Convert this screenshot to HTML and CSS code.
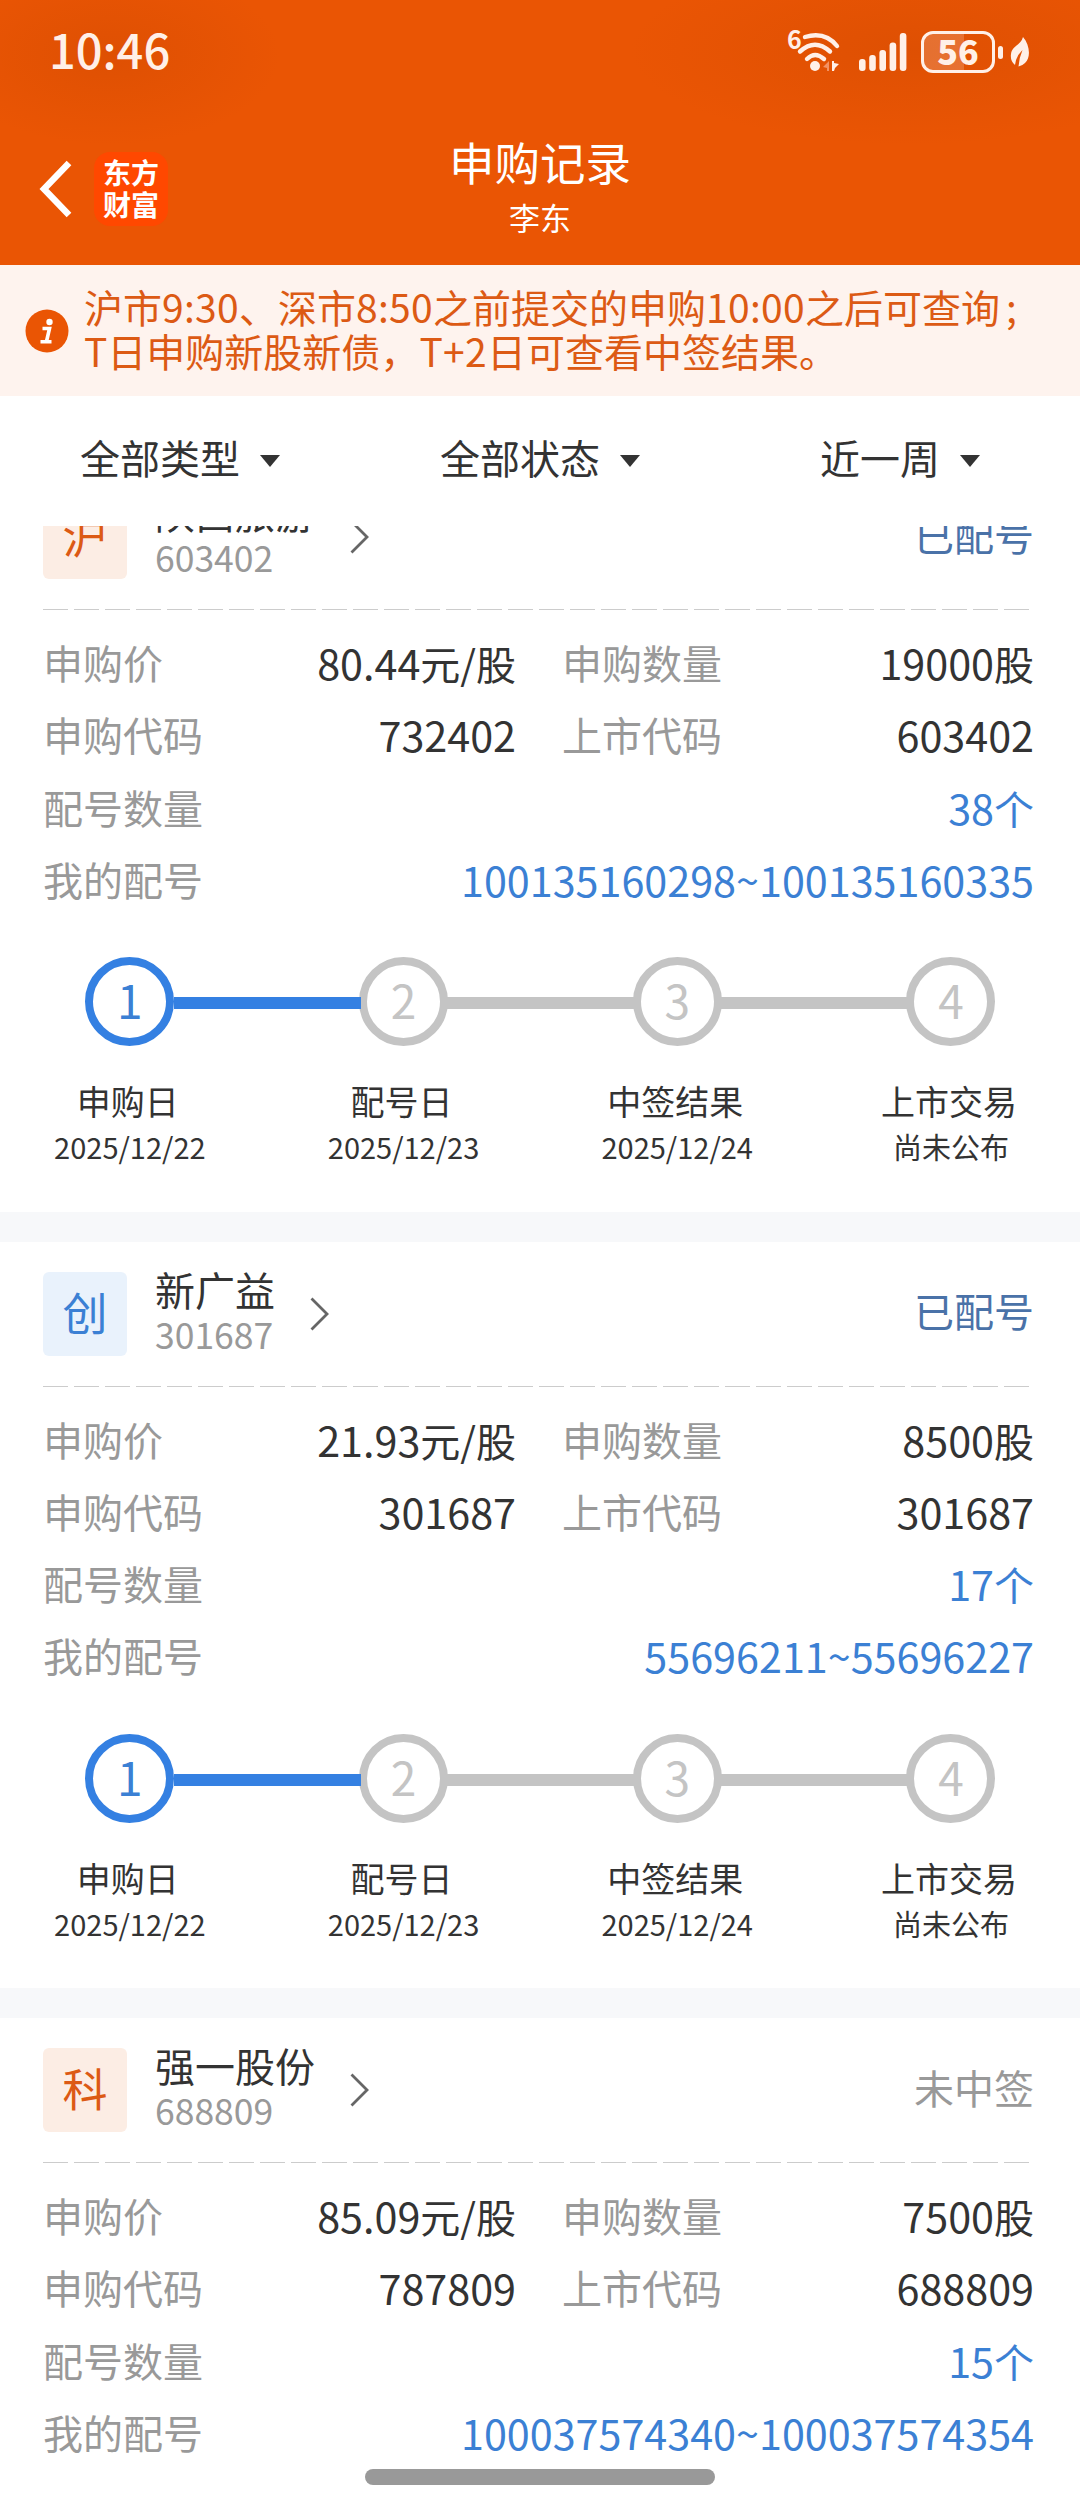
FILE: index.html
```
<!DOCTYPE html>
<html lang="zh-CN">
<head>
	<meta charset="UTF-8">
	<title>申购记录</title>
	<link rel="stylesheet" href="styles.css">
</head>
<body>
	<div class="header">
		<div class="status">
			<span class="time">10:46</span>
			<div class="status-icons">
				<svg class="icon-wifi" width="54" height="46" viewBox="0 0 54 46">
					<text x="0" y="20" class="wifi-num">6</text>
					<g fill="none" stroke="#fff0e8" stroke-width="4.4" stroke-linecap="round">
						<path d="M18 8 Q38 2 50 17"/>
						<path d="M13 22.5 Q28 9 43 22.5"/>
						<path d="M20 30 Q28 22 37 30"/>
					</g>
					<circle cx="28" cy="37" r="5" fill="#fff0e8"/>
					<path d="M42 32v10h-2v-3l-4-1z" fill="#f39263"/>
					<path d="M45 32h2v2l5 1-4 4-1 3h-2z" fill="#fff0e8"/>
				</svg>
				<svg class="icon-signal" width="48" height="40" viewBox="0 0 48 40">
					<g fill="#fff0e8">
						<rect x="0" y="27" width="6.6" height="12" rx="3"/>
						<rect x="10.2" y="23" width="6.6" height="16" rx="3"/>
						<rect x="20.4" y="18" width="6.6" height="21" rx="3"/>
						<rect x="30.6" y="10.5" width="6.6" height="28.5" rx="3"/>
						<rect x="40.8" y="1" width="6.6" height="38" rx="3"/>
					</g>
				</svg>
				<div class="battery"><span>56</span></div>
				<div class="battery-cap"></div>
				<svg class="icon-leaf" width="20" height="32" viewBox="0 0 20 32">
					<path d="M13 1 C20 9 21 22 15 27 Q12 30 8.500 30.500 Q9 22 12.500 14 Q6 20 5 29 Q0 25 1 18 C2 10 11 9 13 1z" fill="#fff0e8"/>
				</svg>
			</div>
		</div>
		<div class="nav">
			<div class="nav-left">
				<svg class="icon-back" width="34" height="58" viewBox="0 0 34 58">
					<path d="M29 3 L4 29 L29 55" fill="none" stroke="#fff" stroke-width="6.500"/>
				</svg>
				<div class="logo">东方<br>财富</div>
			</div>
			<div class="nav-title">
				<h1>申购记录</h1>
				<p>李东</p>
			</div>
		</div>
	</div>

	<div class="notice">
		<svg class="icon-info" width="44" height="44" viewBox="0 0 44 44">
			<circle cx="22" cy="22" r="21.500" fill="#ea5504"/>
			<circle cx="24.500" cy="13" r="3.200" fill="#fff"/>
			<path d="M17.500 19.500h7l-3 13M15.500 32.800h11" fill="none" stroke="#fff" stroke-width="3.600"/>
		</svg>
		<p>沪市<i>9:30</i>、深市<i>8:50</i>之前提交的申购<i>10:00</i>之后可查询<b>;</b><br>T日申购新股新债，<i>T+2</i>日可查看中签结果。</p>
	</div>

	<div class="filter">
		<a href="javascript:;">全部类型</a>
		<a href="javascript:;">全部状态</a>
		<a href="javascript:;">近一周</a>
	</div>

	<div class="list">
		<div class="list-inner">
			<div class="card">
				<div class="card-head">
					<span class="badge">沪</span>
					<div class="stock">
						<div class="name">陕西旅游</div>
						<div class="code">603402</div>
					</div>
					<svg class="icon-more" width="20" height="34" viewBox="0 0 20 34"><path d="M1.500 1.500 L17 17 L1.500 32.500" fill="none" stroke="#666" stroke-width="2.800"/></svg>
					<span class="state">已配号</span>
				</div>
				<div class="dash"></div>
				<div class="info">
					<div class="row">
						<span class="label">申购价</span><span class="value"><i>80.44</i>元/股</span>
						<span class="label second">申购数量</span><span class="value"><i>19000</i>股</span>
					</div>
					<div class="row">
						<span class="label">申购代码</span><span class="value"><i>732402</i></span>
						<span class="label second">上市代码</span><span class="value"><i>603402</i></span>
					</div>
					<div class="row wide"><span class="label">配号数量</span><span class="value blue"><i>38</i>个</span></div>
					<div class="row wide"><span class="label">我的配号</span><span class="value blue"><i>100135160298~100135160335</i></span></div>
				</div>
				<div class="steps">
					<div class="step on"><span class="dot">1</span><p>申购日</p><em>2025/12/22</em></div>
					<div class="step"><span class="dot">2</span><p>配号日</p><em>2025/12/23</em></div>
					<div class="step"><span class="dot">3</span><p>中签结果</p><em>2025/12/24</em></div>
					<div class="step"><span class="dot">4</span><p>上市交易</p><em>尚未公布</em></div>
				</div>
			</div>

			<div class="card">
				<div class="card-head">
					<span class="badge badge-blue">创</span>
					<div class="stock">
						<div class="name">新广益</div>
						<div class="code">301687</div>
					</div>
					<svg class="icon-more" width="20" height="34" viewBox="0 0 20 34"><path d="M1.500 1.500 L17 17 L1.500 32.500" fill="none" stroke="#666" stroke-width="2.800"/></svg>
					<span class="state">已配号</span>
				</div>
				<div class="dash"></div>
				<div class="info">
					<div class="row">
						<span class="label">申购价</span><span class="value"><i>21.93</i>元/股</span>
						<span class="label second">申购数量</span><span class="value"><i>8500</i>股</span>
					</div>
					<div class="row">
						<span class="label">申购代码</span><span class="value"><i>301687</i></span>
						<span class="label second">上市代码</span><span class="value"><i>301687</i></span>
					</div>
					<div class="row wide"><span class="label">配号数量</span><span class="value blue"><i>17</i>个</span></div>
					<div class="row wide"><span class="label">我的配号</span><span class="value blue"><i>55696211~55696227</i></span></div>
				</div>
				<div class="steps">
					<div class="step on"><span class="dot">1</span><p>申购日</p><em>2025/12/22</em></div>
					<div class="step"><span class="dot">2</span><p>配号日</p><em>2025/12/23</em></div>
					<div class="step"><span class="dot">3</span><p>中签结果</p><em>2025/12/24</em></div>
					<div class="step"><span class="dot">4</span><p>上市交易</p><em>尚未公布</em></div>
				</div>
			</div>

			<div class="card">
				<div class="card-head">
					<span class="badge">科</span>
					<div class="stock">
						<div class="name">强一股份</div>
						<div class="code">688809</div>
					</div>
					<svg class="icon-more" width="20" height="34" viewBox="0 0 20 34"><path d="M1.500 1.500 L17 17 L1.500 32.500" fill="none" stroke="#666" stroke-width="2.800"/></svg>
					<span class="state state-none">未中签</span>
				</div>
				<div class="dash"></div>
				<div class="info">
					<div class="row">
						<span class="label">申购价</span><span class="value"><i>85.09</i>元/股</span>
						<span class="label second">申购数量</span><span class="value"><i>7500</i>股</span>
					</div>
					<div class="row">
						<span class="label">申购代码</span><span class="value"><i>787809</i></span>
						<span class="label second">上市代码</span><span class="value"><i>688809</i></span>
					</div>
					<div class="row wide"><span class="label">配号数量</span><span class="value blue"><i>15</i>个</span></div>
					<div class="row wide"><span class="label">我的配号</span><span class="value blue"><i>100037574340~100037574354</i></span></div>
				</div>
			</div>
		</div>
	</div>
	<div class="home-bar"></div>
</body>
</html>
```
FILE: styles.css
```
* {padding: 0; margin: 0; box-sizing: border-box;}
html, body {
	height: 2504px;
	overflow: hidden;
}
body {
	position: relative;
	width: 1080px;
	display: flex;
	flex-direction: column;
	background: #fff;
	color: #333;
	font-size: 40px;
	font-family: "Noto Sans CJK SC", sans-serif;
}
i, em {font-style: normal;}
svg {display: block; flex: none; overflow: visible;}
a {color: inherit; text-decoration: none;}

/* 顶部 */
.header {
	height: 265px;
	flex: none;
	background:
		radial-gradient(ellipse 170px 90px at 110px 55px, rgba(200, 70, 0, .35), rgba(200, 70, 0, 0)),
		radial-gradient(ellipse 280px 95px at 910px 50px, rgba(200, 70, 0, .35), rgba(200, 70, 0, 0)),
		#ea5504;
	color: #fff;
}
.status {
	height: 104px;
	padding: 0 50px 0 49px;
	display: flex;
	justify-content: space-between;
	align-items: center;
	color: #fff0e8;
}
.time {
	margin-top: -7px;
	font-size: 47px;
	line-height: 60px;
	font-weight: 500;
}
.status-icons {
	display: flex;
	align-items: center;
}
.wifi-num {
	font-size: 25px;
	font-weight: 700;
	fill: #fff0e8;
}
.icon-signal {margin-left: 18px;}
.battery {
	width: 74px;
	height: 42px;
	margin-left: 14px;
	border: 3px solid #fff0e8;
	border-radius: 12px;
	background: linear-gradient(90deg, rgba(255, 240, 232, .2) 59%, transparent 59%);
	font-size: 34px;
	line-height: 34px;
	font-weight: 900;
	text-align: center;
}
.battery-cap {
	width: 5px;
	height: 13px;
	margin-left: 3px;
	border-radius: 3px;
	background: #fff0e8;
}
.icon-leaf {margin-left: 7px;}
.nav {
	height: 161px;
	padding: 0 40px;
	display: grid;
	grid-template-columns: 200px 1fr 200px;
}
.nav-left {
	display: flex;
	height: 76px;
	margin-top: 47px;
	align-items: center;
	gap: 20px;
}
.logo {
	width: 74px;
	height: 74px;
	border-radius: 16px;
	background: #ff4800;
	font-size: 28px;
	line-height: 32px;
	padding-top: 4px;
	font-weight: 700;
	text-align: center;
}
.nav-title {
	padding-top: 27px;
	text-align: center;
}
.nav-title h1 {
	font-size: 45.5px;
	line-height: 60px;
	font-weight: 400;
}
.nav-title p {
	margin-top: 5px;
	font-size: 31px;
	line-height: 42px;
}

/* 提示 */
.notice {
	height: 131px;
	flex: none;
	padding: 0 25px;
	display: flex;
	align-items: center;
	gap: 15px;
	background: #fef3ee;
	color: #dc5a14;
	font-size: 39px;
	line-height: 44px;
	white-space: nowrap;
}
.notice p {margin-top: -5px;}
.notice i {letter-spacing: .3px;}
.notice b {font-weight: 400; margin-left: 6px;}

/* 筛选 */
.filter {
	height: 130px;
	flex: none;
	display: grid;
	grid-template-columns: repeat(3, 1fr);
	align-items: center;
	line-height: 60px;
}
.filter a {
	display: flex;
	justify-content: center;
	align-items: center;
	gap: 20px;
	margin-top: -8px;
}
.filter a::after {
	content: "";
	margin-top: 8px;
	border: 10px solid transparent;
	border-top: 12px solid #333;
	border-bottom: 0;
}

/* 列表, 第一张卡片滚动到筛选栏下面 */
.list {
	flex: 1;
	overflow: hidden;
}
.list-inner {margin-top: -61px;}
.card {
	height: 776.6px;
	padding: 30px 46px 0 43px;
	border-bottom: 30px solid #f7f8fa;
}
.card-head {
	height: 84px;
	display: flex;
	align-items: center;
}
.badge {
	width: 84px;
	height: 84px;
	border-radius: 6px;
	background: #fcede4;
	color: #dc5a14;
	font-size: 45px;
	line-height: 79px;
	text-align: center;
}
.badge-blue {
	background: #e9f2fc;
	color: #3b80d4;
}
.stock {
	margin-left: 28px;
	align-self: flex-start;
}
.name {
	line-height: 44px;
	margin-top: -5px;
}
.code {
	margin-top: 1px;
	color: #999;
	font-size: 35.5px;
	line-height: 44px;
}
.icon-more {margin-left: 35px;}
.state {
	margin-left: auto;
	margin-top: -7px;
	color: #4a72a8;
}
.state-none {color: #999;}
.dash {
	height: 1px;
	margin-top: 30px;
	background: repeating-linear-gradient(90deg, #ccc 0, #ccc 25px, transparent 25px, transparent 31px);
}
.info {
	margin-top: 16px;
}
.row {
	height: 72.3px;
	line-height: 72px;
	display: grid;
	grid-template-columns: 200px 273px 246px 272px;
}
.row.wide {grid-template-columns: 200px 791px;}
.label {color: #999;}
.second {padding-left: 46px;}
.value {text-align: right;}
.value i {
	font-size: 41.3px;
}
.blue {color: #3b80d4;}

/* 进度 */
.steps {
	margin: 42px -6px 0 -50px;
	display: grid;
	grid-template-columns: repeat(4, 273.7px);
}
.step {
	position: relative;
	text-align: center;
}
.step + .step::before {
	content: "";
	position: absolute;
	left: -93px;
	top: 40px;
	width: 187px;
	height: 12px;
	background: #c4c4c4;
}
.step.on + .step::before {background: #3480e2;}
.dot {
	display: block;
	width: 89px;
	height: 89px;
	margin: 0 auto;
	border: 8px solid #c4c4c4;
	border-radius: 50%;
	color: #c4c4c4;
	font-size: 46px;
	line-height: 68px;
}
.step.on .dot {
	border-color: #3480e2;
	color: #3b80d4;
}
.step p {
	margin: 30px 4px 0 0;
	font-size: 34px;
	line-height: 50px;
}
.step em {
	display: block;
	margin-top: -1px;
	font-size: 29px;
	line-height: 42px;
}

.home-bar {
	position: absolute;
	left: 365px;
	bottom: 19px;
	width: 350px;
	height: 16px;
	border-radius: 8px;
	background: #999;
}
```
